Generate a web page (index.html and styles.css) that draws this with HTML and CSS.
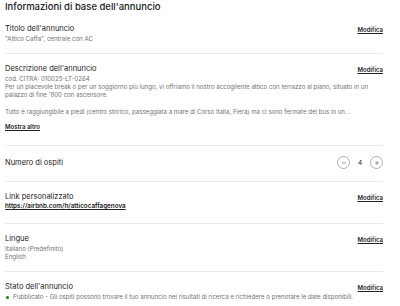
FILE: index.html
```html
<!DOCTYPE html>
<html lang="it">
<head>
    <meta charset="UTF-8">
    <meta name="viewport" content="width=device-width, initial-scale=1.0">
    <title>Informazioni di base dell'annuncio</title>
    <link rel="stylesheet" href="styles.css">
</head>
<body>
    <h1>Informazioni di base dell'annuncio</h1>

    <section class="item">
        <div class="item-head">
            <span class="label">Titolo dell'annuncio</span>
            <a class="edit" href="#">Modifica</a>
        </div>
        <p class="sub">"Attico Caffa", centrale con AC</p>
    </section>

    <section class="item">
        <div class="item-head">
            <span class="label">Descrizione dell'annuncio</span>
            <a class="edit" href="#">Modifica</a>
        </div>
        <p class="sub">cod. CITRA: 010025-LT-0264<br>Per un piacevole break o per un soggiorno più lungo, vi offriamo il nostro accogliente attico con terrazzo al piano, situato in un palazzo di fine '800 con ascensore.</p>
        <p class="sub para">Tutto è raggiungibile a piedi (centro storico, passeggiata a mare di Corso Italia, Fiera) ma ci sono fermate del bus in un...</p>
        <a class="more" href="#">Mostra altro</a>
    </section>

    <section class="item item-guests">
        <div class="item-head">
            <span class="label">Numero di ospiti</span>
            <div class="stepper">
                <button class="step" aria-label="Meno">
                    <svg viewBox="0 0 12 12" width="6" height="6"><path d="M2 6h8" stroke="currentColor" stroke-width="1.4" fill="none"/></svg>
                </button>
                <span class="count">4</span>
                <button class="step" aria-label="Più">
                    <svg viewBox="0 0 12 12" width="6" height="6"><path d="M2 6h8M6 2v8" stroke="currentColor" stroke-width="1.4" fill="none"/></svg>
                </button>
            </div>
        </div>
    </section>

    <section class="item">
        <div class="item-head">
            <span class="label">Link personalizzato</span>
            <a class="edit" href="#">Modifica</a>
        </div>
        <a class="url" href="#">https://airbnb.com/h/atticocaffagenova</a>
    </section>

    <section class="item">
        <div class="item-head">
            <span class="label">Lingue</span>
            <a class="edit" href="#">Modifica</a>
        </div>
        <p class="sub">Italiano (Predefinito)<br>English</p>
    </section>

    <section class="item">
        <div class="item-head">
            <span class="label">Stato dell'annuncio</span>
            <a class="edit" href="#">Modifica</a>
        </div>
        <p class="sub status"><span class="dot"></span>Pubblicato - Gli ospiti possono trovare il tuo annuncio nei risultati di ricerca e richiedere o prenotare le date disponibili.</p>
    </section>
</body>
</html>
```

FILE: styles.css
```css
body {
    font-family: Inter, "Liberation Sans", sans-serif;
    margin: 0;
    padding: 0 17px 0 5px;
    background-color: #fff;
    color: #222;
}

h1 {
    margin: 0;
    font-size: 9.5px;
    line-height: 13px;
    font-weight: 500;
}

.item {
    padding: 10px 0;
    border-bottom: 1px solid #ebebeb;
}

.item:first-of-type {
    padding-top: 11px;
}

.item:last-of-type {
    border-bottom: none;
}

.item-head {
    display: flex;
    justify-content: space-between;
    align-items: center;
}

.label {
    font-size: 7.5px;
    line-height: 10px;
}

.edit,
.more,
.url {
    color: #222;
    font-size: 6px;
    font-weight: 600;
    text-decoration: underline;
}

.sub {
    margin: 1px 0 0;
    font-size: 6.1px;
    line-height: 8px;
    color: #717171;
}

.sub.para {
    margin-top: 9px;
}

.more {
    display: block;
    margin-top: 7px;
    line-height: 8px;
    margin-bottom: 4px;
}

.url {
    display: block;
    font-size: 6.3px;
    line-height: 8px;
    margin-bottom: 3px;
}

.item-guests {
    padding-bottom: 12px;
}

.stepper {
    display: flex;
    align-items: center;
    gap: 6px;
}

.step {
    width: 13px;
    height: 13px;
    padding: 0;
    border: 1px solid #b0b0b0;
    border-radius: 50%;
    background: #fff;
    color: #717171;
    display: flex;
    align-items: center;
    justify-content: center;
}

.count {
    font-size: 6.5px;
    min-width: 8px;
    text-align: center;
}

.status {
    display: flex;
    align-items: center;
}

.dot {
    width: 3px;
    height: 3px;
    margin: 0 4px 0 1px;
    border-radius: 50%;
    background-color: #008a05;
    flex-shrink: 0;
}
```
